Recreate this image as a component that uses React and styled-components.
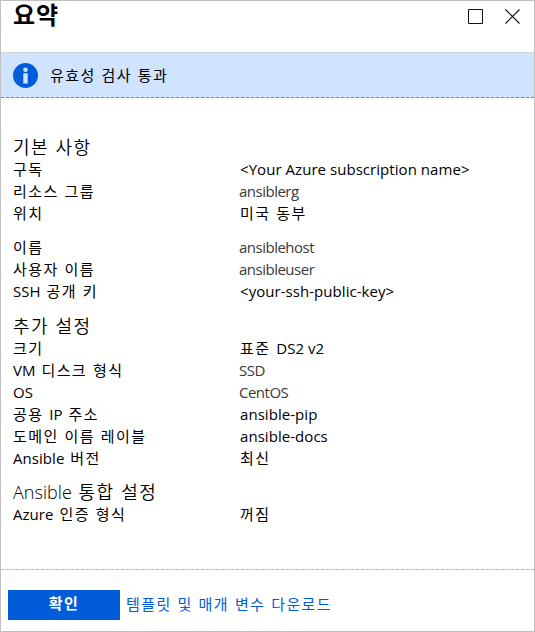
import React from "react";
import styled, { createGlobalStyle } from "styled-components";

const Global = createGlobalStyle`
  * { box-sizing: border-box; }
  body { margin: 0; background: #fff; }
`;

const Panel = styled.main`
  width: 535px;
  height: 632px;
  display: flex;
  flex-direction: column;
  border: 1px solid #c0c0c0;
  background: #fff;
  color: #000;
  font-family: "Open Sans", "Noto Sans CJK KR", sans-serif;
  font-size: 15px;
`;

const Header = styled.header`
  height: 52px;
  flex: none;
  display: flex;
  justify-content: space-between;
  padding: 0 13px 0 12px;
  border-bottom: 1px solid #d2d2d2;
`;

const Title = styled.h1`
  margin: 0;
  line-height: 25px;
  font-family: "Noto Sans CJK KR", sans-serif;
  font-size: 24px;
  font-weight: 700;
  letter-spacing: 0.8px;
`;

const Controls = styled.div`
  display: flex;
  gap: 21px;
  padding-top: 8px;
`;

const Icon = styled.svg`
  display: block;
  flex: none;
`;

const Notice = styled.section`
  height: 44px;
  flex: none;
  display: flex;
  align-items: center;
  gap: 12px;
  padding-left: 12px;
  line-height: 22px;
  background: #d0e3ff;
`;

const DashedLine = styled.div`
  height: 1px;
  flex: none;
  background: repeating-linear-gradient(
    90deg,
    ${(p) => p.$dash} 0 3px,
    ${(p) => p.$gap} 3px 5px
  );
`;

const Summary = styled.div`
  flex: 1;
  padding: 37px 12px 0;
`;

const Group = styled.section`
  margin-bottom: ${(p) => p.$after ?? 12}px;
`;

const GroupTitle = styled.h2`
  margin: 0;
  height: 23px;
  line-height: 24px;
  font-size: 18px;
  font-weight: 350;
`;

const Row = styled.div`
  display: grid;
  grid-template-columns: 227px 1fr;
  height: 22px;
  line-height: 22px;
`;

const Label = styled.span`
  white-space: nowrap;
  letter-spacing: 1.4px;
  word-spacing: 0.6px;
`;

const Latin = styled.span`
  white-space: nowrap;
  letter-spacing: 0.05px;
  word-spacing: 0;
`;

const MutedValue = styled.span`
  margin-left: -1px;
  white-space: nowrap;
  letter-spacing: -0.5px;
  color: #3a3a3a;
`;

const Footer = styled.footer`
  height: 61px;
  flex: none;
  display: flex;
  gap: 6px;
  padding: 20px 7px 0;
`;

const Confirm = styled.button`
  width: 112px;
  height: 30px;
  padding: 0;
  border: 0;
  background: #015cda;
  color: #fff;
  font: inherit;
  font-weight: 700;
  line-height: 27px;
  display: flex;
  justify-content: center;
`;

const Download = styled.a`
  height: 30px;
  line-height: 28px;
  color: #015cda;
`;

function Text({ children }) {
  const runs = children.split(/([\x21-\x7e]+(?: [\x21-\x7e]+)*)/).filter(Boolean);
  return (
    <Label>
      {runs.map((run, i) =>
        /^[\x21-\x7e]/.test(run) ? <Latin key={i}>{run}</Latin> : run
      )}
    </Label>
  );
}

const groups = [
  {
    title: "기본 사항",
    rows: [
      ["구독", "<Your Azure subscription name>"],
      ["리소스 그룹", "ansiblerg", true],
      ["위치", "미국 동부"],
    ],
  },
  {
    rows: [
      ["이름", "ansiblehost", true],
      ["사용자 이름", "ansibleuser", true],
      ["SSH 공개 키", "<your-ssh-public-key>"],
    ],
  },
  {
    title: "추가 설정",
    after: 11,
    rows: [
      ["크기", "표준 DS2 v2"],
      ["VM 디스크 형식", "SSD", true],
      ["OS", "CentOS", true],
      ["공용 IP 주소", "ansible-pip"],
      ["도메인 이름 레이블", "ansible-docs"],
      ["Ansible 버전", "최신"],
    ],
  },
  { title: "Ansible 통합 설정", rows: [["Azure 인증 형식", "꺼짐"]] },
];

export default function App() {
  return (
    <Panel>
      <Global />
      <Header>
        <Title>요약</Title>
        <Controls>
          <Icon width="16" height="16" viewBox="0 0 16 16">
            <path d="M.5.5h14v14H.5z" fill="none" stroke="#111" />
          </Icon>
          <Icon width="16" height="16" viewBox="0 0 16 16">
            <path d="M.5.5l14 14M14.5.5l-14 14" stroke="#111" strokeWidth="1.1" />
          </Icon>
        </Controls>
      </Header>
      <Notice>
        <Icon width="25" height="25" viewBox="0 0 25 25">
          <circle cx="12.5" cy="12.5" r="12.5" fill="#015cda" />
          <circle cx="12.5" cy="6.7" r="2.3" fill="#d0e3ff" />
          <path d="M10.3 10.3h4.4v10.2h-4.4z" fill="#d0e3ff" />
        </Icon>
        <Text>유효성 검사 통과</Text>
      </Notice>
      <DashedLine $dash="#20b0dc" $gap="#b4dcf4" />
      <Summary>
        {groups.map((g, i) => (
          <Group key={i} $after={g.after}>
            {g.title && (
              <GroupTitle>
                <Text>{g.title}</Text>
              </GroupTitle>
            )}
            {g.rows.map(([label, value, muted]) => (
              <Row key={label}>
                <Text>{label}</Text>
                {muted ? <MutedValue>{value}</MutedValue> : <Text>{value}</Text>}
              </Row>
            ))}
          </Group>
        ))}
      </Summary>
      <DashedLine $dash="#9cc6d0" $gap="#dcd6d6" />
      <Footer>
        <Confirm>
          <Text>확인</Text>
        </Confirm>
        <Download>
          <Text>템플릿 및 매개 변수 다운로드</Text>
        </Download>
      </Footer>
    </Panel>
  );
}
